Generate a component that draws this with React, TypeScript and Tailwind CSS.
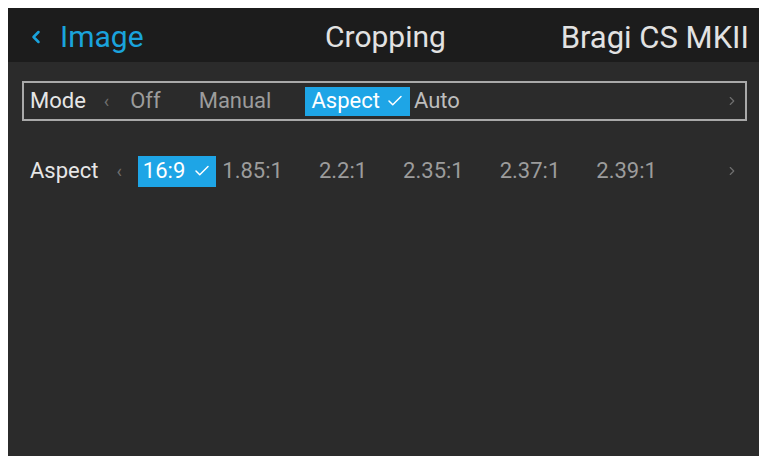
import { Check, ChevronLeft, ChevronRight } from "lucide-react";

const aspects = ["1.85:1", "2.2:1", "2.35:1", "2.37:1", "2.39:1"];

export default function App() {
  return (
    <div
      className="w-[759px] h-[456px] bg-white pl-2 pt-2 overflow-hidden"
      style={{ fontFamily: "Roboto, 'Noto Sans', sans-serif" }}
    >
      <div className="flex flex-col h-full bg-[#2b2b2b]">
        {/* header */}
        <div className="h-[54px] bg-[#1c1c1c] flex items-center pt-[4px] text-[30px] leading-none">
          <div className="flex items-center w-[300px] text-[#1aa3dc]">
            <ChevronLeft className="w-5 h-5 ml-[18px]" strokeWidth={3} />
            <span className="ml-[14px]">Image</span>
          </div>
          <div className="flex-1 text-[#e2e2e2] ml-[17px]">Cropping</div>
          <div className="text-[#e2e2e2] text-[31px] mr-[10px]">Bragi CS MKII</div>
        </div>

        {/* mode row */}
        <div className="mt-[19px] ml-[14px] mr-[12px] h-[40px] border-2 border-[#a9a9a9] flex items-center text-[22px] leading-none">
          <span className="ml-[6px] text-[#e6e6e6]">Mode</span>
          <span className="ml-[18px] text-[#6f6f6f] text-[18px]">‹</span>
          <span className="ml-[21px] text-[#9c9c9c]">Off</span>
          <span className="ml-[38px] text-[#9c9c9c]">Manual</span>
          <span className="ml-[34px] h-[29px] px-[6px] bg-[#1ea5e6] text-white flex items-center gap-[6px]">
            Aspect
            <Check className="w-[18px] h-[18px]" strokeWidth={2} />
          </span>
          <span className="ml-[4px] text-[#bdbdbd]">Auto</span>
          <span className="flex-1" />
          <ChevronRight className="w-[14px] h-[14px] mr-[6px] text-[#6f6f6f]" strokeWidth={2} />
        </div>

        {/* aspect row */}
        <div className="mt-[34px] ml-[14px] mr-[12px] h-[32px] flex items-center text-[22px] leading-none">
          <span className="ml-[8px] text-[#e6e6e6]">Aspect</span>
          <span className="ml-[18px] text-[#6f6f6f] text-[18px]">‹</span>
          <span className="ml-[16px] h-[31px] px-[5px] bg-[#1ea5e6] text-white flex items-center gap-[8px]">
            16:9
            <Check className="w-[18px] h-[18px]" strokeWidth={2} />
          </span>
          <div className="flex ml-[6px] gap-[36px] text-[#9c9c9c]">
            {aspects.map((a) => (
              <span key={a}>{a}</span>
            ))}
          </div>
          <span className="flex-1" />
          <ChevronRight className="w-[14px] h-[14px] mr-[8px] text-[#6f6f6f]" strokeWidth={2} />
        </div>
      </div>
    </div>
  );
}
